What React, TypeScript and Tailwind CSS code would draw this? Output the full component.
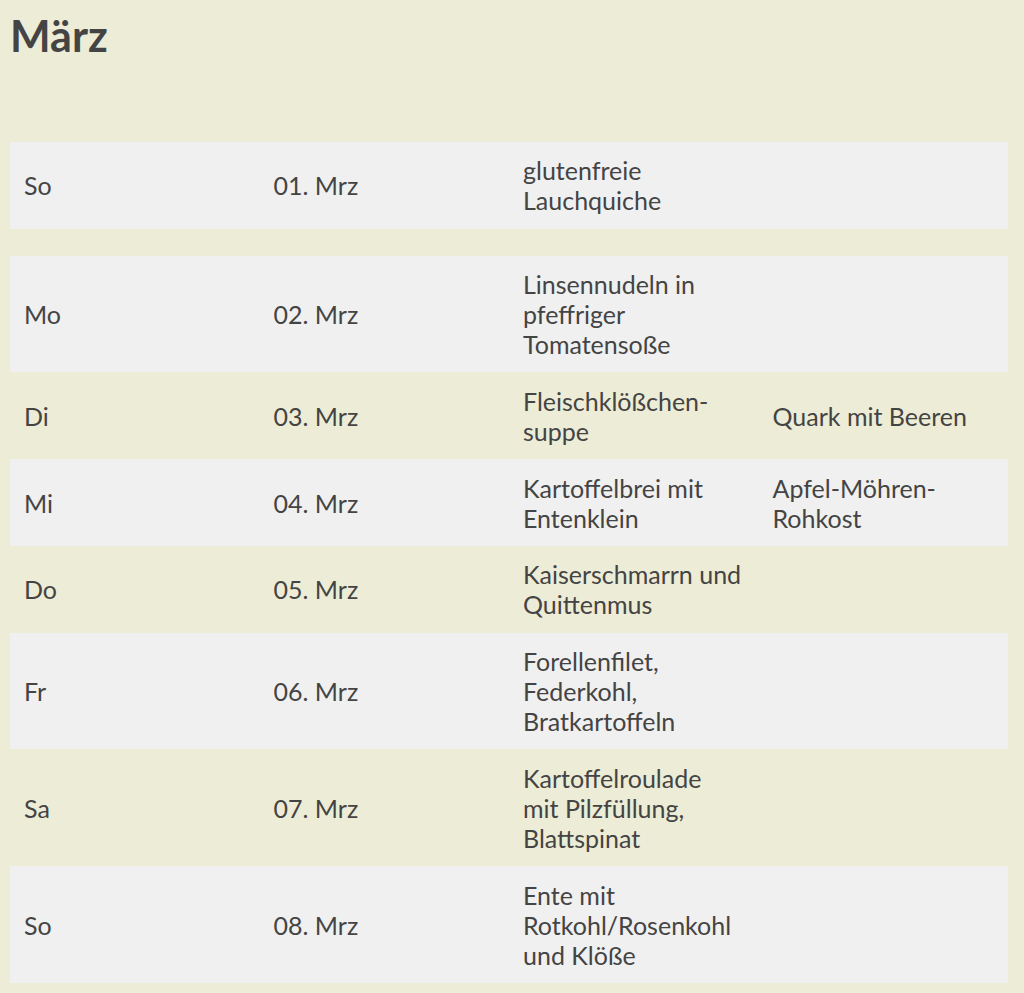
const rows: { day: string; date: string; meal: string[]; dessert: string[] }[] = [
  { day: 'So', date: '01. Mrz', meal: ['glutenfreie', 'Lauchquiche'], dessert: [] },
  { day: '', date: '', meal: [], dessert: [] },
  { day: 'Mo', date: '02. Mrz', meal: ['Linsennudeln in', 'pfeffriger', 'Tomatensoße'], dessert: [] },
  { day: 'Di', date: '03. Mrz', meal: ['Fleischklößchen-', 'suppe'], dessert: ['Quark mit Beeren'] },
  { day: 'Mi', date: '04. Mrz', meal: ['Kartoffelbrei mit', 'Entenklein'], dessert: ['Apfel-Möhren-', 'Rohkost'] },
  { day: 'Do', date: '05. Mrz', meal: ['Kaiserschmarrn und', 'Quittenmus'], dessert: [] },
  { day: 'Fr', date: '06. Mrz', meal: ['Forellenfilet,', 'Federkohl,', 'Bratkartoffeln'], dessert: [] },
  { day: 'Sa', date: '07. Mrz', meal: ['Kartoffelroulade', 'mit Pilzfüllung,', 'Blattspinat'], dessert: [] },
  { day: 'So', date: '08. Mrz', meal: ['Ente mit', 'Rotkohl/Rosenkohl', 'und Klöße'], dessert: [] },
];

function Lines({ lines }: { lines: string[] }) {
  return (
    <>
      {lines.map((l) => (
        <span key={l} className="block whitespace-nowrap">
          {l}
        </span>
      ))}
    </>
  );
}

export default function App() {
  return (
    <div className="min-h-[993px] bg-[#edecd6] text-[#444] font-['Lato',sans-serif] pt-[12px]">
      <h2 className="px-[10px] text-[43px] leading-[48px] font-bold text-[#444]">März</h2>

      <table className="mt-[82px] ml-[10px] w-[998px] table-fixed border-collapse text-[25px] leading-[30px]">
        <tbody>
          {rows.map((r, i) => (
            <tr key={i} className={i % 2 === 0 ? 'bg-[#f0f0f0]' : ''}>
              <td className="pl-[14px] pr-[8px] py-[13.4px] align-middle">{r.day}</td>
              <td className="pl-[14px] pr-[8px] py-[13.4px] align-middle">{r.date}</td>
              <td className="pl-[14px] pr-[8px] py-[13.4px] align-middle">
                <Lines lines={r.meal} />
              </td>
              <td className="pl-[14px] pr-[8px] py-[13.4px] align-middle">
                <Lines lines={r.dessert} />
              </td>
            </tr>
          ))}
        </tbody>
      </table>
    </div>
  );
}
